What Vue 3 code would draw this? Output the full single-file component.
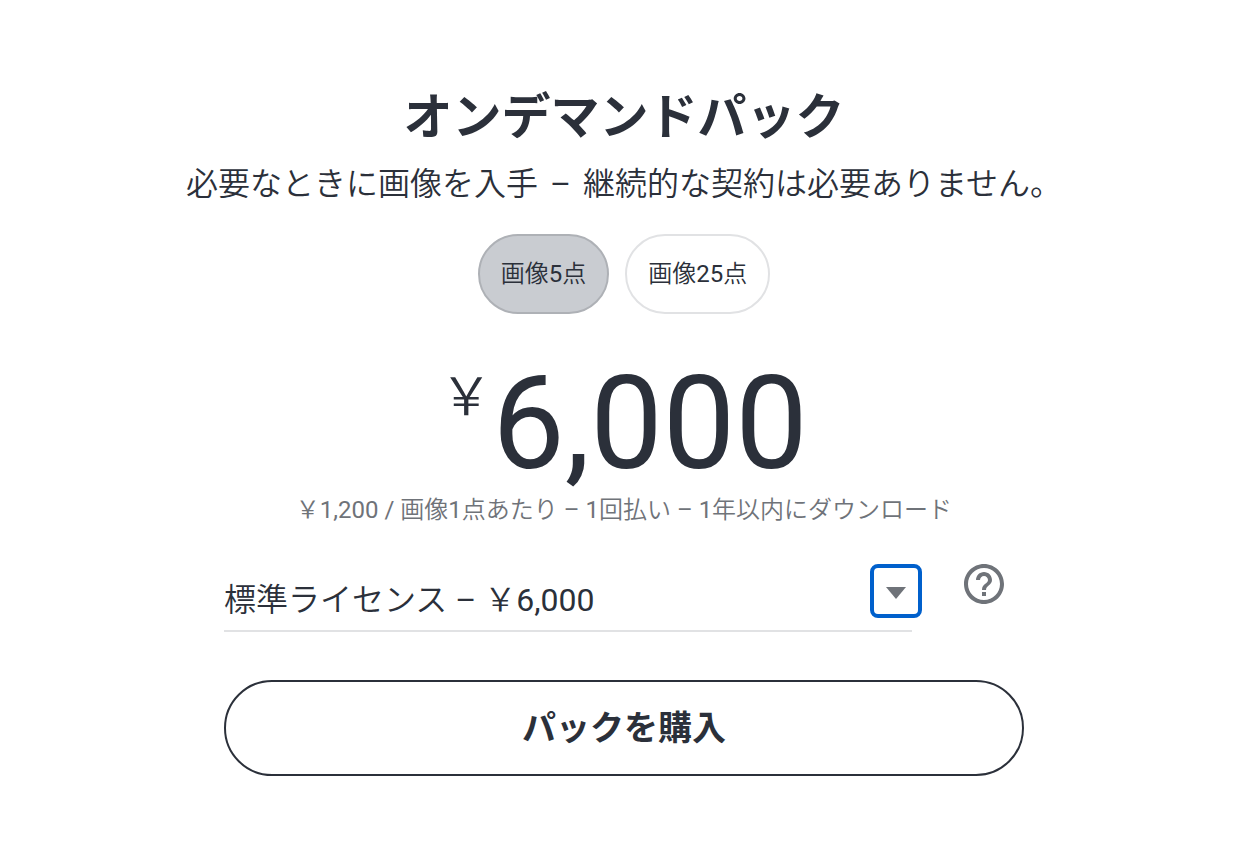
<script setup>
import { ref, computed } from 'vue'

const packs = [
  { id: 'five', label: '画像5点', price: '6,000', unit: '1,200' },
  { id: 'twentyfive', label: '画像25点', price: '25,000', unit: '1,000' },
]
const selected = ref('five')
const pack = computed(() => packs.find((p) => p.id === selected.value))
</script>

<template>
  <main class="card">
    <h1>オンデマンドパック</h1>
    <p class="lead">必要なときに画像を入手 <span class="dash">–</span> 継続的な契約は必要ありません。</p>
    <div class="packs">
      <button
        v-for="p in packs"
        :key="p.id"
        type="button"
        class="pill"
        :class="{ active: p.id === selected }"
        :aria-pressed="p.id === selected"
        @click="selected = p.id"
      >{{ p.label }}</button>
    </div>
    <p class="price"><span class="yen">￥</span><span class="amount">{{ pack.price }}</span></p>
    <p class="note">￥{{ pack.unit }} / 画像1点あたり – 1回払い – 1年以内にダウンロード</p>
    <form class="order" @submit.prevent>
      <div class="license-row">
        <div class="field">
          <select aria-label="ライセンス">
            <option>標準ライセンス – ￥{{ pack.price }}</option>
          </select>
          <span class="arrow" aria-hidden="true">
            <svg width="20" height="12" viewBox="0 0 20 12"><path d="M0 0H20L10 12Z" fill="#6f7379" /></svg>
          </span>
        </div>
        <button type="button" class="help" aria-label="ヘルプ">
          <svg width="48" height="48" viewBox="0 0 24 24" fill="#6f7379">
            <path d="M11 18h2v-2h-2v2zm1-16C6.480 2 2 6.480 2 12s4.480 10 10 10 10-4.480 10-10S17.520 2 12 2zm0 18c-4.410 0-8-3.590-8-8s3.590-8 8-8 8 3.590 8 8-3.590 8-8 8zm0-14c-2.210 0-4 1.790-4 4h2c0-1.100.9-2 2-2s2 .9 2 2c0 2-3 1.750-3 5h2c0-2.250 3-2.500 3-5 0-2.210-1.790-4-4-4z" />
          </svg>
        </button>
      </div>
      <button type="submit" class="buy">パックを購入</button>
    </form>
  </main>
</template>

<style>
body {
  background: #fff;
}
</style>

<style scoped>
.card,
.card button,
.card select {
  font-family: Roboto, "Noto Sans CJK JP DemiLight", "Noto Sans CJK JP Light", "Noto Sans CJK JP", sans-serif;
  color: #2b303a;
}
.card {
  box-sizing: border-box;
  display: flex;
  flex-direction: column;
  align-items: center;
  padding: 82px 24px 88px;
  margin-right: 6px;
}
.card h1,
.card .buy {
  font-family: Roboto, "Noto Sans CJK JP", sans-serif;
  font-weight: 700;
}
h1 {
  margin: 0;
  font-size: 49px;
  line-height: 72px;
}
.lead {
  margin: 6px 0 0;
  font-size: 32px;
  line-height: 48px;
}
.dash {
  margin: 0 4px;
}
.packs {
  display: flex;
  gap: 16px;
  margin-top: 26px;
}
.pill {
  height: 80px;
  padding: 0 21px 6px;
  border: 2px solid #e1e2e4;
  border-radius: 40px;
  background: #fff;
  font-size: 24px;
}
.pill.active {
  background: #c9ccd1;
  border-color: #aeb1b6;
}
.price {
  display: flex;
  align-items: flex-start;
  margin: 46px 0 0;
  line-height: 128px;
}
.yen {
  font-size: 52px;
  line-height: 76px;
}
.amount {
  font-size: 129px;
}
.note {
  margin: 4px 0 0;
  font-size: 24px;
  line-height: 36px;
  color: #6f7379;
}
.order {
  width: 100%;
  max-width: 800px;
}
.license-row {
  display: flex;
  gap: 48px;
  align-items: flex-start;
  margin-top: 32px;
}
.field {
  position: relative;
  flex: 1;
}
.field select {
  box-sizing: border-box;
  width: 100%;
  height: 72px;
  padding: 10px 56px 0 0;
  border: 0;
  border-bottom: 2px solid #e1e2e4;
  border-radius: 0;
  background: none;
  appearance: none;
  outline: none;
  font-size: 32px;
}
.arrow {
  position: absolute;
  top: 4px;
  right: -10px;
  box-sizing: border-box;
  display: flex;
  align-items: center;
  justify-content: center;
  width: 52px;
  height: 54px;
  padding-top: 4px;
  border: 4px solid #0060cc;
  border-radius: 8px;
  background: #fff;
  pointer-events: none;
}
.help {
  margin-right: 16px;
  padding: 0;
  border: 0;
  background: none;
}
.help svg {
  display: block;
}
.buy {
  width: 100%;
  height: 96px;
  margin-top: 48px;
  padding: 0 24px 6px;
  border: 2px solid #2b303a;
  border-radius: 48px;
  background: #fff;
  font-size: 34px;
}
</style>
